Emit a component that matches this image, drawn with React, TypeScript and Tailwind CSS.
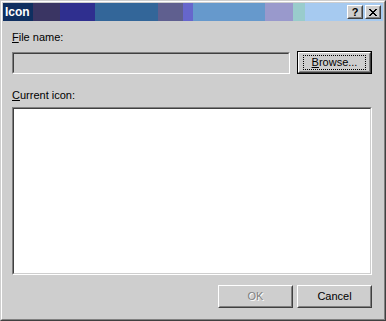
import React from "react";

const font = { fontFamily: '"Liberation Sans", Arial, sans-serif' };

function Btn({ children, def, disabled }: { children: React.ReactNode; def?: boolean; disabled?: boolean }) {
  const inner = (
    <div className="h-full w-full border border-t-white border-l-white border-b-[#404040] border-r-[#404040]">
      <div className="h-full w-full border border-t-[#cecece] border-l-[#cecece] border-b-[#808080] border-r-[#808080] flex items-center justify-center">
        {def ? (
          <div className="border border-dotted border-black px-[5px] h-[15px] flex items-center w-[63px] justify-center">{children}</div>
        ) : (
          <span className={disabled ? "text-[#808080] [text-shadow:1px_1px_0_#ffffff]" : "text-black"}>{children}</span>
        )}
      </div>
    </div>
  );
  if (def) {
    return <div className="w-[75px] h-[23px] border border-black">{inner}</div>;
  }
  return <div className="w-[75px] h-[23px]">{inner}</div>;
}

function CapBtn({ children }: { children: React.ReactNode }) {
  return (
    <div className="w-[16px] h-[14px] bg-[#cecece] border border-t-white border-l-white border-b-[#404040] border-r-[#404040]">
      <div className="h-full w-full border border-t-[#cecece] border-l-[#cecece] border-b-[#808080] border-r-[#808080] flex items-center justify-center">
        {children}
      </div>
    </div>
  );
}

export default function App() {
  const segs: [number, string][] = [
    [30, "#0f2f60"],
    [27, "#3a3563"],
    [35, "#2f2f8f"],
    [63, "#336699"],
    [25, "#5f5f8f"],
    [10, "#6666cc"],
    [72, "#6699cc"],
    [28, "#9999cc"],
    [12, "#99cccc"],
    [78, "#a6caf0"],
  ];
  return (
    <div className="w-[386px] h-[321px] bg-[#cecece] text-[11px] leading-[13px] text-black" style={font}>
      <div className="w-full h-full border border-t-[#cecece] border-l-[#cecece] border-b-[#404040] border-r-[#404040]">
        <div className="w-full h-full border border-t-white border-l-white border-b-[#808080] border-r-[#808080] p-px flex flex-col">
          <div className="relative h-[18px] flex items-center">
            <div className="absolute inset-0 flex">
              {segs.map(([w, c], i) => (
                <div key={i} className={i === segs.length - 1 ? "h-full flex-1" : "h-full"} style={{ width: i === segs.length - 1 ? undefined : w, background: c }} />
              ))}
            </div>
            <span className="relative pl-[2px] font-bold text-white text-[12px]">Icon</span>
            <div className="relative ml-auto mr-[2px] flex gap-[2px]">
              <CapBtn>
                <span className="font-bold text-[11px] leading-none text-black mt-px">?</span>
              </CapBtn>
              <CapBtn>
                <svg width="8" height="7" viewBox="0 0 8 7" shapeRendering="crispEdges">
                  <path d="M0 0h2v1h-2zM6 0h2v1h-2zM1 1h2v1h-2zM5 1h2v1h-2zM2 2h4v1h-4zM3 3h2v1h-2zM2 4h4v1h-4zM1 5h2v1h-2zM5 5h2v1h-2zM0 6h2v1h-2zM6 6h2v1h-2z" fill="#000" />
                </svg>
              </CapBtn>
            </div>
          </div>
          <div className="flex flex-col pl-[9px] pr-[11px] pt-[10px]">
            <div><span className="underline">F</span>ile name:</div>
            <div className="flex items-center gap-[7px] mt-[7px]">
              <div className="w-[278px] h-[22px] border border-t-[#808080] border-l-[#808080] border-b-white border-r-white">
                <div className="w-full h-full border border-t-[#404040] border-l-[#404040] border-b-[#cecece] border-r-[#cecece] bg-[#cecece]" />
              </div>
              <Btn def>
                <span><span className="underline">B</span>rowse...</span>
              </Btn>
            </div>
            <div className="mt-[15px]"><span className="underline">C</span>urrent icon:</div>
            <div className="mt-[5px] w-[360px] h-[168px] border border-t-[#808080] border-l-[#808080] border-b-white border-r-white">
              <div className="w-full h-full border border-t-[#404040] border-l-[#404040] border-b-[#cecece] border-r-[#cecece] bg-white" />
            </div>
            <div className="mt-[10px] flex justify-end gap-[4px]">
              <Btn disabled>OK</Btn>
              <Btn>Cancel</Btn>
            </div>
          </div>
        </div>
      </div>
    </div>
  );
}
